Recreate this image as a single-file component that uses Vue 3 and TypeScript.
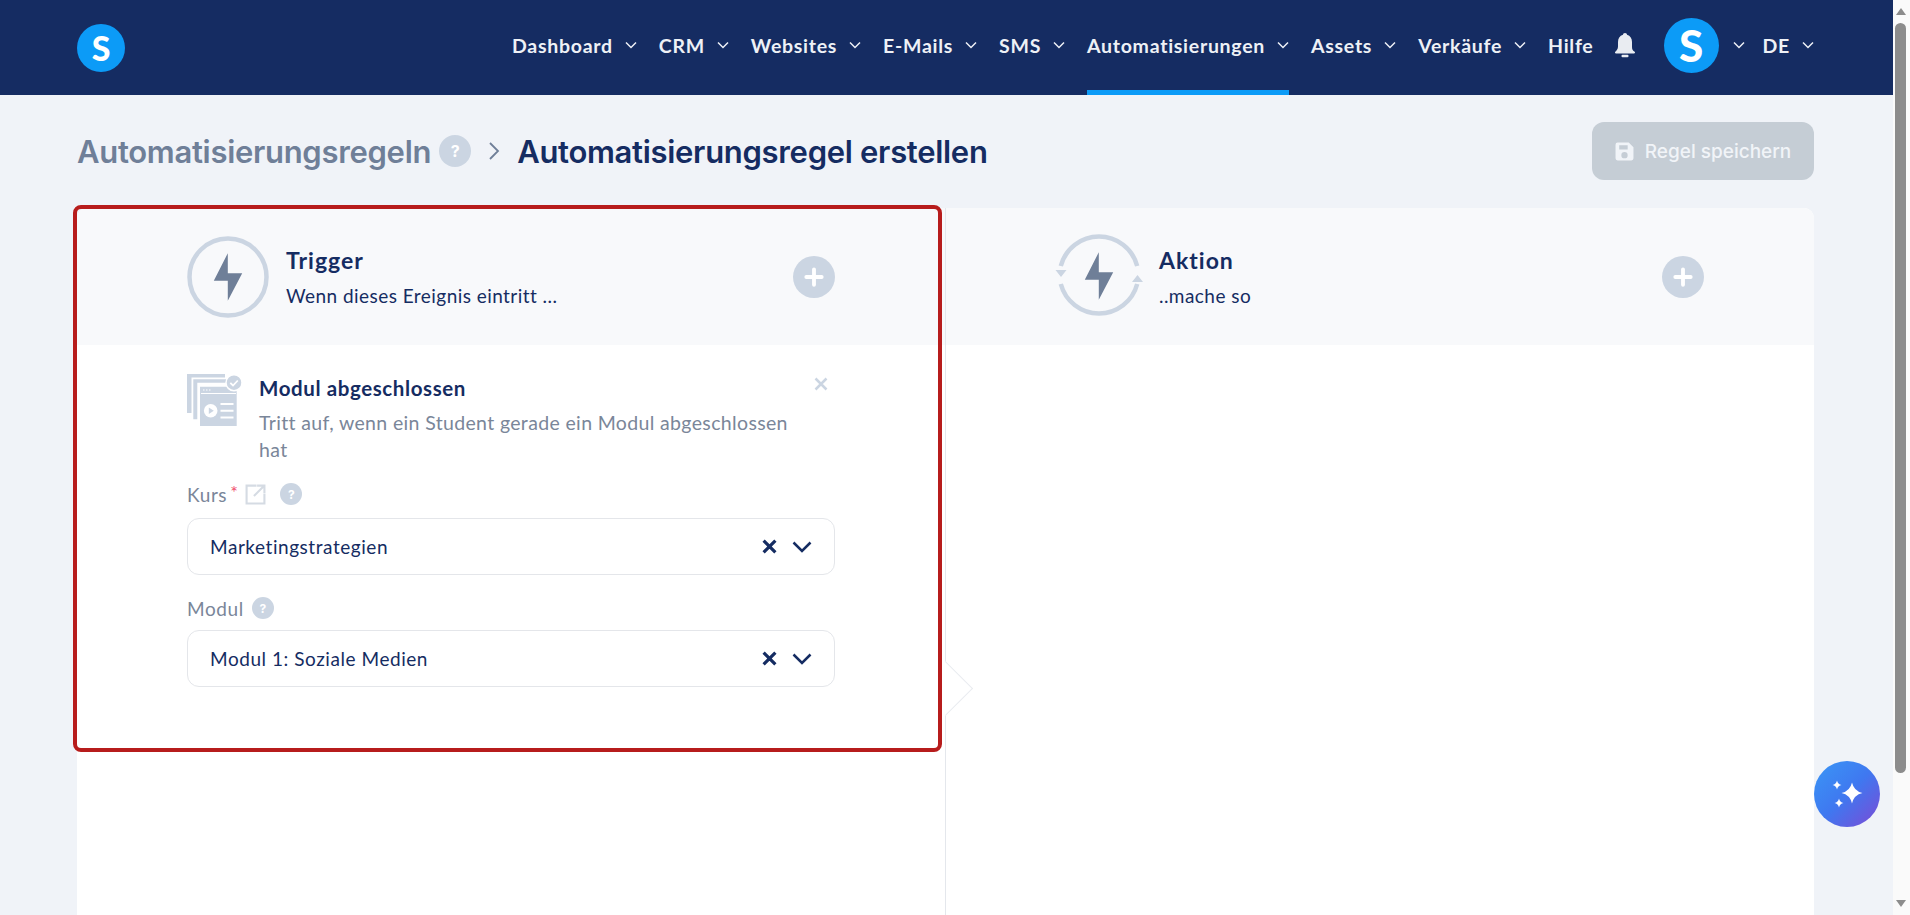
<template>
  <div class="screen">
    <div class="page">
      <header class="topbar">
        <div class="logo">S</div>
        <nav class="nav">
          <a
            v-for="item in navItems"
            :key="item.label"
            class="nav-item"
            :class="{ active: item.active }"
          >
            <span>{{ item.label }}</span>
            <svg v-if="item.menu" class="nav-chevron" viewBox="0 0 12 8"><path d="M1 1.5l5 5 5-5" /></svg>
          </a>
          <svg class="bell" viewBox="0 0 24 26">
            <path d="M12 1c-1.2 0-2 .8-2 1.8C6.6 3.700 5 6.500 5 10v4.500c0 2.500-1.300 4-2.700 5.300-.7.700-.3 1.700.7 1.700h18c1 0 1.400-1 .7-1.700C19.300 18.500 19 17 19 14.500V10c0-3.500-1.600-6.300-5-7.200C14 1.800 13.200 1 12 1z" />
            <rect x="8.500" y="22.800" width="7" height="2.400" rx="1" />
          </svg>
          <div class="avatar">S</div>
          <svg class="nav-chevron avatar-chevron" viewBox="0 0 12 8"><path d="M1 1.500l5 5 5-5" /></svg>
          <a class="nav-item lang">
            <span>DE</span>
            <svg class="nav-chevron" viewBox="0 0 12 8"><path d="M1 1.500l5 5 5-5" /></svg>
          </a>
        </nav>
      </header>

      <main class="content">
        <div class="title-row">
          <h1 class="crumbs">
            <span class="crumb-parent">Automatisierungsregeln</span>
            <span class="help help-lg">?</span>
            <svg class="crumb-sep" viewBox="0 0 12 20"><path d="M2 2l8 8-8 8" /></svg>
            <span class="crumb-current">Automatisierungsregel erstellen</span>
          </h1>
          <button class="save-btn" disabled>
            <svg viewBox="0 0 18 18" class="save-icon">
              <path d="M2.500 0.500h10.500l4.500 4.500v10.500a2 2 0 0 1-2 2h-13a2 2 0 0 1-2-2v-13a2 2 0 0 1 2-2zM4 3v4h8V3zM9 9.500a3 3 0 1 0 0 6 3 3 0 0 0 0-6z" fill-rule="evenodd" />
            </svg>
            Regel speichern
          </button>
        </div>

        <section class="board">
          <div class="col col-left">
            <div class="col-head">
              <svg class="head-icon" viewBox="0 0 82 82">
                <circle cx="41" cy="41" r="38.500" class="ring" />
                <path d="M40.800 17.200L26.800 44.800H40.800V64.800L55.200 37.200H40.800z" class="bolt" />
              </svg>
              <div class="head-text">
                <div class="head-title">Trigger</div>
                <div class="head-sub">Wenn dieses Ereignis eintritt ...</div>
              </div>
              <span class="plus">
                <svg viewBox="0 0 20 20"><path d="M10 3v14M3 10h14" /></svg>
              </span>
            </div>

            <div class="col-body">
              <div class="module">
                <svg class="module-icon" viewBox="0 0 56 53">
                  <path d="M0 0h38v3.500H4.500V39H0z" fill="#cbd5e2" />
                  <path d="M6.300 5.300H45v3.500H10.300V45.300H6.300z" fill="#cbd5e2" />
                  <path d="M13 12.700h36.700V52H13z" fill="#cbd5e2" />
                  <path d="M14 19.500h35" stroke="#fff" stroke-width="1.200" />
                  <path d="M16 16h1.500M19 16h1.500M22 16h1.500" stroke="#fff" stroke-width="1.200" />
                  <circle cx="23.700" cy="36.700" r="6.800" fill="#fff" />
                  <path d="M21.800 33.500l5 3.200-5 3.200z" fill="#cbd5e2" />
                  <path d="M33.500 30h13M33.500 36.700h13M33.500 43.400h13" stroke="#fff" stroke-width="2" />
                  <circle cx="47" cy="8.700" r="8" fill="#cbd5e2" stroke="#fff" stroke-width="1.500" />
                  <path d="M43.300 8.800l2.700 2.700 4.800-5" fill="none" stroke="#fff" stroke-width="1.800" />
                </svg>
                <div class="module-text">
                  <div class="module-title">Modul abgeschlossen</div>
                  <p class="module-desc">Tritt auf, wenn ein Student gerade ein Modul abgeschlossen hat</p>
                </div>
                <svg class="module-close" viewBox="0 0 14 14"><path d="M1.500 1.500l11 11M12.500 1.500l-11 11" /></svg>
              </div>

              <div v-for="field in fields" :key="field.label" class="field">
                <div class="field-label">
                  <span>{{ field.label }}</span>
                  <span v-if="field.required" class="req">*</span>
                  <svg v-if="field.link" class="ext-link" viewBox="0 0 20 20">
                    <path d="M11 1.500H1.500v17h17V9M8.500 11.500L18 2M11.500 1.500h7v7" />
                  </svg>
                  <span class="help help-sm">?</span>
                </div>
                <div class="select">
                  <span class="select-value">{{ field.value }}</span>
                  <svg class="select-clear" viewBox="0 0 14 14"><path d="M1.500 1.500l11 11M12.500 1.500l-11 11" /></svg>
                  <svg class="select-arrow" viewBox="0 0 20 12"><path d="M1.500 1.500l8.500 8.500 8.500-8.500" /></svg>
                </div>
              </div>
            </div>
            <div class="focus-frame"></div>
          </div>

          <div class="col col-right">
            <div class="col-head col-head-right">
              <svg class="head-icon head-icon-action" viewBox="0 0 90 90">
                <path d="M6.800 34A39.500 39.500 0 0 1 83.200 34M6.800 52A39.500 39.500 0 0 0 83.200 52" class="ring" />
                <path d="M1.500 38h11l-5.500 7zM78 50h11l-5.500-7z" fill="#cbd5e2" />
                <path d="M44.800 20.200L30.800 47.800H44.800V67.800L59.200 40.200H44.800z" class="bolt" />
              </svg>
              <div class="head-text">
                <div class="head-title">Aktion</div>
                <div class="head-sub">..mache so</div>
              </div>
              <span class="plus">
                <svg viewBox="0 0 20 20"><path d="M10 3v14M3 10h14" /></svg>
              </span>
            </div>
            <span class="flow-arrow"></span>
          </div>
        </section>
      </main>
    </div>

    <aside class="scrollbar">
      <span class="scroll-up"></span>
      <span class="scroll-thumb"></span>
      <span class="scroll-down"></span>
    </aside>

    <button class="assist">
      <svg viewBox="0 0 66 66">
        <path v-for="s in sparkles" :key="s.cx" :d="sparkle(s.cx, s.cy, s.r)" fill="#fff" />
      </svg>
    </button>
  </div>
</template>

<script setup lang="ts">
const navItems = [
  { label: 'Dashboard', menu: true },
  { label: 'CRM', menu: true },
  { label: 'Websites', menu: true },
  { label: 'E-Mails', menu: true },
  { label: 'SMS', menu: true },
  { label: 'Automatisierungen', menu: true, active: true },
  { label: 'Assets', menu: true },
  { label: 'Verkäufe', menu: true },
  { label: 'Hilfe', menu: false }
]

const fields = [
  { label: 'Kurs', required: true, link: true, value: 'Marketingstrategien' },
  { label: 'Modul', required: false, link: false, value: 'Modul 1: Soziale Medien' }
]

const sparkles = [
  { cx: 38, cy: 32, r: 10.5 },
  { cx: 23, cy: 24, r: 4.5 },
  { cx: 25, cy: 42, r: 4.5 }
]

// vier-zackiger Stern
const sparkle = (cx: number, cy: number, r: number) => {
  const k = r * 0.18
  return `M${cx} ${cy - r}Q${cx + k} ${cy - k} ${cx + r} ${cy}Q${cx + k} ${cy + k} ${cx} ${cy + r}Q${cx - k} ${cy + k} ${cx - r} ${cy}Q${cx - k} ${cy - k} ${cx} ${cy - r}Z`
}
</script>

<style>
html,
body {
  margin: 0;
  overflow: hidden;
}
</style>

<style scoped>
.screen {
  display: flex;
  height: 915px;
  overflow: hidden;
  background: #f0f3f8;
  font-family: "Lato", "Noto Sans", sans-serif;
  color: #152c62;
}

.page {
  flex: 1;
  min-width: 0;
  display: flex;
  flex-direction: column;
}

.topbar {
  height: 95px;
  flex: none;
  background: #152c62;
  display: flex;
  align-items: center;
  justify-content: space-between;
  padding: 0 79px 0 77px;
}

.logo,
.avatar {
  display: flex;
  align-items: center;
  justify-content: center;
  border-radius: 50%;
  background: #0c9bf7;
  color: #fff;
  font-weight: 900;
}

.logo {
  width: 48px;
  height: 48px;
  font-size: 34px;
}

.nav {
  display: flex;
  align-items: center;
  height: 100%;
}

.nav-item {
  position: relative;
  display: flex;
  align-items: center;
  gap: 12px;
  height: 100%;
  box-sizing: border-box;
  padding-bottom: 5px;
  margin-right: 22px;
  color: #eef1f6;
  font-size: 19.5px;
  font-weight: 700;
  letter-spacing: 0.72px;
  white-space: nowrap;
}

.nav-item.active::after {
  content: "";
  position: absolute;
  left: 0;
  right: 0;
  bottom: 0;
  height: 5px;
  background: #0c9bf7;
}

.nav-chevron {
  width: 12px;
  height: 8px;
  fill: none;
  stroke: #eef1f6;
  stroke-width: 1.5;
}

.bell {
  width: 24px;
  height: 26px;
  fill: #e9ecf1;
  margin: 0 27px 5px -3px;
}

.avatar {
  width: 55px;
  height: 55px;
  margin-bottom: 5px;
  font-size: 44px;
}

.avatar-chevron {
  margin: 0 18px 5px 14px;
}

.lang {
  margin-right: 0;
}

.content {
  flex: 1;
  min-height: 0;
  display: flex;
  flex-direction: column;
  padding: 27px 79px 0 77px;
}

.title-row {
  display: flex;
  align-items: center;
  justify-content: space-between;
  height: 58px;
  margin-bottom: 28px;
}

.crumbs {
  display: flex;
  align-items: center;
  margin: 0;
  font-family: "Inter", "Liberation Sans", sans-serif;
  font-size: 31px;
  font-weight: 600;
  letter-spacing: -0.3px;
}

.crumb-parent {
  color: #6f7f98;
}

.crumb-current {
  color: #152c62;
}

.crumb-sep {
  width: 12px;
  height: 20px;
  margin: 0 17px;
  fill: none;
  stroke: #6f7f98;
  stroke-width: 1.8;
}

.help {
  display: inline-flex;
  align-items: center;
  justify-content: center;
  border-radius: 50%;
  background: #cbd5e2;
  color: #fff;
  font-family: "Inter", "Liberation Sans", sans-serif;
  font-weight: 700;
  letter-spacing: 0;
}

.help-lg {
  width: 32px;
  height: 32px;
  margin-left: 8px;
  font-size: 16px;
}

.help-sm {
  width: 22px;
  height: 22px;
  margin-left: 8px;
  font-size: 12px;
}

.save-btn {
  display: flex;
  align-items: center;
  gap: 11px;
  width: 222px;
  height: 58px;
  justify-content: center;
  border: none;
  border-radius: 12px;
  background: #c5cdd5;
  color: #f1f4f8;
  font-family: "Inter", "Liberation Sans", sans-serif;
  font-size: 19px;
  font-weight: 500;
}

.save-icon {
  width: 19px;
  height: 19px;
  fill: #f1f4f8;
}

.board {
  flex: 1;
  display: grid;
  grid-template-columns: 869px 1fr;
  background: #fff;
  border-radius: 10px 10px 0 0;
}

.col {
  position: relative;
  min-width: 0;
}

.col-left {
  border-right: 1px solid #e4e7ec;
}

.col-head {
  display: flex;
  align-items: center;
  height: 137px;
  padding: 0 110px;
  background: #f8f9fb;
}

.col-left .col-head {
  border-top-left-radius: 10px;
}

.col-right .col-head {
  border-top-right-radius: 10px;
}

.col-head-right {
  padding-left: 108px;
}

.head-icon {
  flex: none;
  width: 82px;
  height: 82px;
  margin-right: 17px;
}

.head-icon-action {
  width: 90px;
  height: 90px;
  margin-right: 15px;
}

.ring {
  fill: none;
  stroke: #cbd5e2;
  stroke-width: 4.5;
}

.bolt {
  fill: #6f7f98;
}

.head-text {
  flex: 1;
  padding-top: 2px;
}

.head-title {
  font-size: 23px;
  font-weight: 700;
  line-height: 28px;
  letter-spacing: 1px;
}

.head-sub {
  margin-top: 9px;
  font-size: 19px;
  line-height: 26px;
  letter-spacing: 0.45px;
}

.plus {
  flex: none;
  display: flex;
  align-items: center;
  justify-content: center;
  width: 42px;
  height: 42px;
  border-radius: 50%;
  background: #cbd5e2;
}

.plus svg {
  width: 22px;
  height: 22px;
  fill: none;
  stroke: #fff;
  stroke-width: 3.5;
  stroke-linecap: round;
}

.col-body {
  padding: 29px 110px 0;
}

.module {
  display: flex;
  align-items: flex-start;
  gap: 16px;
}

.module-icon {
  flex: none;
  width: 56px;
  height: 53px;
}

.module-text {
  flex: 1;
}

.module-title {
  font-size: 20.5px;
  font-weight: 700;
  line-height: 28px;
  letter-spacing: 0.6px;
}

.module-desc {
  margin: 7px 0 0;
  max-width: 540px;
  color: #7a8699;
  font-size: 19.5px;
  line-height: 27px;
  letter-spacing: 0.35px;
}

.module-close {
  flex: none;
  width: 14px;
  height: 14px;
  margin: 3px 7px 0 0;
  fill: none;
  stroke: #cbd5e2;
  stroke-width: 2.500;
}

.field {
  margin-top: 18px;
}

.field:nth-child(2) {
  margin-top: 16px;
}

.field:nth-child(2) .field-label {
  margin-bottom: 9px;
}

.field-label {
  display: flex;
  align-items: center;
  height: 30px;
  margin-bottom: 7px;
  color: #7a8699;
  font-size: 19px;
  letter-spacing: 0.6px;
}

.req {
  align-self: flex-start;
  margin: 2px 0 0 3px;
  color: #f0506e;
  font-size: 18px;
}

.ext-link {
  width: 21px;
  height: 21px;
  margin-left: 7px;
  margin-right: 6px;
  fill: none;
  stroke: #d5dbe3;
  stroke-width: 2;
}

.select {
  display: flex;
  align-items: center;
  height: 57px;
  box-sizing: border-box;
  padding: 0 22px 0 22px;
  background: #fff;
  border: 1px solid #e4e6ea;
  border-radius: 12px;
}

.select-value {
  flex: 1;
  font-size: 19px;
  letter-spacing: 0.55px;
}

.select-clear {
  width: 15px;
  height: 15px;
  fill: none;
  stroke: #152c62;
  stroke-width: 3;
}

.select-arrow {
  width: 20px;
  height: 12px;
  margin-left: 15px;
  fill: none;
  stroke: #152c62;
  stroke-width: 2.500;
}

.focus-frame {
  position: absolute;
  z-index: 2;
  top: -3px;
  left: -4px;
  width: 869px;
  height: 547px;
  box-sizing: border-box;
  border: 4px solid #b71c1c;
  border-radius: 8px;
  pointer-events: none;
}

.flow-arrow {
  position: absolute;
  top: 461px;
  left: -20px;
  width: 39px;
  height: 39px;
  box-sizing: border-box;
  background: #fff;
  border-top: 1px solid #e9ecf0;
  border-right: 1px solid #e9ecf0;
  transform: rotate(45deg);
}

.scrollbar {
  position: relative;
  flex: none;
  width: 17px;
  background: #fafafa;
}

.scroll-thumb {
  position: absolute;
  top: 23px;
  left: 2px;
  width: 11px;
  height: 750px;
  border-radius: 6px;
  background: #8c8c8c;
}

.scroll-up,
.scroll-down {
  position: absolute;
  left: 3px;
  width: 0;
  height: 0;
  border-left: 5px solid transparent;
  border-right: 5px solid transparent;
}

.scroll-up {
  top: 8px;
  border-bottom: 7px solid #8c8c8c;
}

.scroll-down {
  bottom: 8px;
  border-top: 7px solid #8c8c8c;
}

.assist {
  position: fixed;
  right: 30px;
  bottom: 88px;
  width: 66px;
  height: 66px;
  padding: 0;
  border: none;
  border-radius: 50%;
  background: linear-gradient(135deg, #3a97f6 0%, #3f78f0 50%, #7c4ad5 100%);
}

.assist svg {
  display: block;
  width: 66px;
  height: 66px;
}
</style>
